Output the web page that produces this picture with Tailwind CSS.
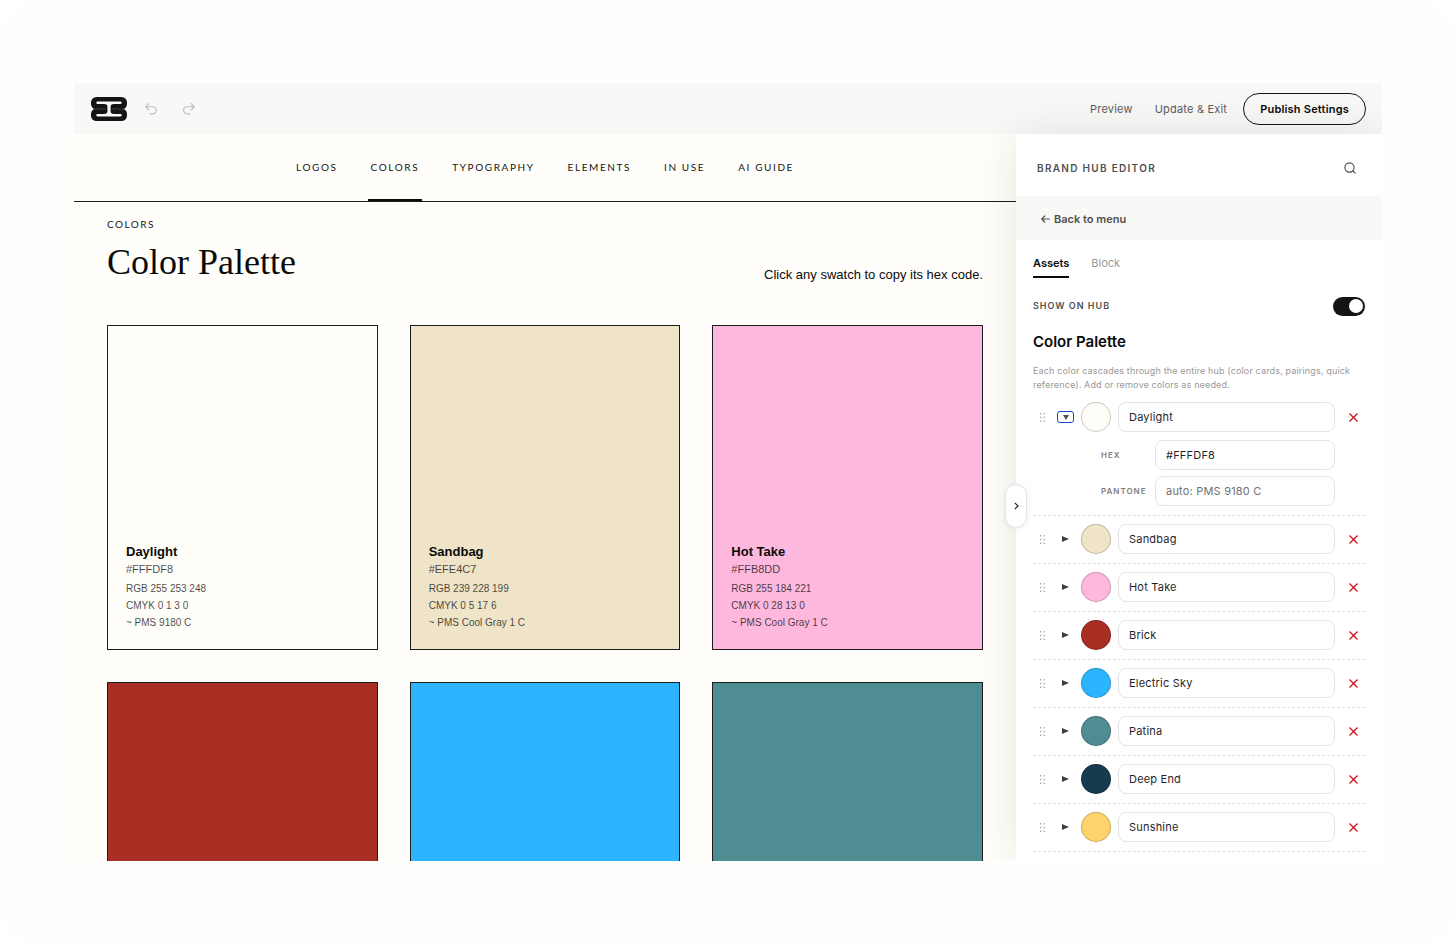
<!DOCTYPE html>
<html lang="en">
  <head>
    <meta charset="UTF-8" />
    <meta name="viewport" content="width=device-width, initial-scale=1.0" />
    <title>Brand Hub Editor</title>
    <script src="https://cdn.jsdelivr.net/npm/@tailwindcss/browser@4"></script>
  </head>
  <body class="bg-white font-['Inter',sans-serif]">
    <div class="h-screen rounded-[40px] bg-[#fefefc] px-[74px] pt-[83px] pb-[84px]">
      <div class="flex h-full flex-col overflow-hidden bg-[#fffefa]">
        <!-- Top bar -->
        <header class="flex h-[51px] shrink-0 items-center bg-[#f8f8f7] px-4">
          <a href="#" aria-label="Home" class="ml-px">
            <svg class="h-6 w-9" viewBox="0 0 36 24" fill="none">
              <rect width="36" height="12.500" rx="5.500" fill="#141414" />
              <rect y="11.500" width="36" height="12.500" rx="5.500" fill="#141414" />
              <path d="M6.500 4.600H29.500C31.200 4.600 31.200 7 29.500 7H23C20.500 7 19.600 8 19.600 9.500V14.500C19.600 16 20.500 17 23 17H29.500C31.200 17 31.200 19.400 29.500 19.400H6.500C4.800 19.400 4.800 17 6.500 17H13C15.500 17 16.400 16 16.400 14.500V9.500C16.400 8 15.500 7 13 7H6.500C4.800 7 4.800 4.600 6.500 4.600Z" fill="#f8f8f7" />
              <path d="M3 12H15M21 12H33" stroke="#5a5a5a" stroke-width=".6" />
            </svg>
          </a>
          <button aria-label="Undo" class="ml-[18px] text-[#bcbcbc]">
            <svg class="h-3 w-3" viewBox="0 0 12 12" fill="none" stroke="currentColor" stroke-width="1.100" stroke-linecap="round" stroke-linejoin="round"><path d="M3.800 .6L.6 3.800L3.800 7M.6 3.800H7.800A3.500 3.500 0 0 1 7.800 10.900H5.400" /></svg>
          </button>
          <button aria-label="Redo" class="ml-[26px] text-[#bcbcbc]">
            <svg class="h-3 w-3" viewBox="0 0 12 12" fill="none" stroke="currentColor" stroke-width="1.100" stroke-linecap="round" stroke-linejoin="round"><path d="M8.200 .6L11.400 3.800L8.200 7M11.400 3.800H4.200A3.500 3.500 0 0 0 4.200 10.900H6.600" /></svg>
          </button>
          <div class="ml-auto flex items-center text-[11px] tracking-[0.2px] text-[#5c5c5c]">
            <button class="pt-0.5">Preview</button>
            <button class="ml-[22px] pt-0.5">Update &amp; Exit</button>
            <button class="ml-4 h-8 rounded-full border border-[#141414] px-4 pt-px font-semibold text-[#0a0a0a]">Publish Settings</button>
          </div>
        </header>

        <div class="flex min-h-0 flex-1">
          <!-- Hub preview -->
          <main class="min-w-0 flex-1">
            <nav class="flex h-[68px] justify-center gap-[27px] border-b border-[#1c1c1c] font-['Lato',sans-serif] text-[10px] tracking-[1.6px] text-[#141414]">
              <a href="#" class="flex items-center px-[3px]">LOGOS</a>
              <a href="#" class="flex items-center border-b-2 border-[#0a0a0a] px-[3px] pt-0.5">COLORS</a>
              <a href="#" class="flex items-center px-[3px]">TYPOGRAPHY</a>
              <a href="#" class="flex items-center px-[3px]">ELEMENTS</a>
              <a href="#" class="flex items-center px-[3px]">IN USE</a>
              <a href="#" class="flex items-center px-[3px]">AI GUIDE</a>
            </nav>
            <section class="px-[33px] pt-4">
              <p class="font-['Lato',sans-serif] text-[10px] leading-3 tracking-[1.5px] text-[#141414]">COLORS</p>
              <div class="flex items-end justify-between">
                <h1 class="pt-2 font-['Liberation_Serif',serif] text-[36px] leading-[48px] text-[#0a0a0a]">Color Palette</h1>
                <p class="font-['Liberation_Sans',sans-serif] text-[13px] leading-[22px] text-[#0a0a0a]">Click any swatch to copy its hex code.</p>
              </div>
              <div id="cards" class="mt-[39px] grid grid-cols-3 gap-8 font-['Liberation_Sans',sans-serif]"></div>
            </section>
          </main>

          <!-- Editor panel -->
          <aside class="relative w-[366px] shrink-0 bg-white shadow-[0_0_40px_rgba(40,35,20,0.11)]">
            <button aria-label="Collapse panel" class="absolute top-[350px] left-[-11px] flex h-11 w-[22px] items-center justify-center rounded-[11px] border border-[#e4e4e4] bg-white shadow-[0_1px_6px_rgba(0,0,0,0.08)]">
              <svg class="h-2 w-[5px]" viewBox="0 0 5 8" fill="none" stroke="#222" stroke-width="1.200"><path d="M.8 .8L4 4L.8 7.200" /></svg>
            </button>
            <div class="flex h-[62px] items-center justify-between pt-1.5 pr-[26px] pl-[21px]">
              <h2 class="text-[10px] font-semibold tracking-[1.3px] text-[#505050]">BRAND HUB EDITOR</h2>
              <button aria-label="Search">
                <svg class="h-3 w-3" viewBox="0 0 12 12" fill="none" stroke="#444" stroke-width="1.100" stroke-linecap="round"><circle cx="5.500" cy="5.500" r="4.600" /><path d="M8.800 8.800L11.200 11.200" /></svg>
              </button>
            </div>
            <div class="flex h-11 items-center bg-[#f8f8f7] px-[25px] pt-0.5">
              <button class="flex items-center gap-1 text-[11px] font-semibold text-[#505050]">
                <svg class="h-2 w-[9px]" viewBox="0 0 9 8" fill="none" stroke="currentColor" stroke-width="1.200" stroke-linecap="round" stroke-linejoin="round"><path d="M3.700 1L.8 4L3.700 7M.8 4H8.400" /></svg>
                Back to menu
              </button>
            </div>
            <div class="px-[17px]">
              <div class="flex gap-[22px] pt-[13px] text-[11px] leading-5">
                <button class="border-b-2 border-[#0a0a0a] pb-[3px] font-semibold text-[#0a0a0a]">Assets</button>
                <button class="border-b-2 border-transparent pb-[3px] text-[#989898]">Block</button>
              </div>
              <div class="mt-[18px] flex h-5 items-center justify-between">
                <label for="show" class="text-[9px] font-semibold tracking-[1px] text-[#505050]">SHOW ON HUB</label>
                <input id="show" type="checkbox" checked class="flex h-[19px] w-8 appearance-none items-center rounded-full bg-[#8d8d8d] p-0.5 before:h-[14px] before:w-[14px] before:rounded-full before:bg-white checked:justify-end checked:bg-[#141414]" />
              </div>
              <h3 class="mt-4 text-[15px] leading-5 font-semibold text-[#0a0a0a]">Color Palette</h3>
              <p class="mt-3 text-[9px] leading-[14px] tracking-[0.15px] text-[#989898]">Each color cascades through the entire hub (color cards, pairings, quick reference). Add or remove colors as needed.</p>
              <ul id="rows" class="mt-0.5"></ul>
            </div>
          </aside>
        </div>
      </div>
    </div>

    <script>
      const colors = [
        { name: "Daylight", hex: "#FFFDF8", rgb: "255 253 248", cmyk: "0 1 3 0", pms: "PMS 9180 C", open: true },
        { name: "Sandbag", hex: "#EFE4C7", rgb: "239 228 199", cmyk: "0 5 17 6", pms: "PMS Cool Gray 1 C" },
        { name: "Hot Take", hex: "#FFB8DD", rgb: "255 184 221", cmyk: "0 28 13 0", pms: "PMS Cool Gray 1 C" },
        { name: "Brick", hex: "#A92F24" },
        { name: "Electric Sky", hex: "#2DB4FF" },
        { name: "Patina", hex: "#4F8D93" },
        { name: "Deep End", hex: "#163B4E" },
        { name: "Sunshine", hex: "#FFD36B" },
      ];

      const field = "h-[30px] min-w-0 flex-1 rounded-lg border border-[#e4e4e4] bg-white px-2.5 text-[11px] tracking-[0.2px] text-[#1f1f2e] placeholder:text-[#707070]";

      // swatch cards
      document.getElementById("cards").innerHTML = colors.slice(0, 6).map((c) => `
        <button aria-label="Copy ${c.name}" class="flex aspect-[5/6] flex-col justify-end border border-[#1c1c1c] px-[18px] pb-[18px] text-left text-[10px] leading-[17px] text-[#0a0a0a]/75" style="background:${c.hex}">
          ${c.rgb ? `
          <span class="text-[13px] leading-[18px] font-bold text-[#0a0a0a]">${c.name}</span>
          <span class="text-[11px] leading-4">${c.hex}</span>
          <span class="mt-[3px]">RGB ${c.rgb}</span>
          <span>CMYK ${c.cmyk}</span>
          <span>~ ${c.pms}</span>` : ""}
        </button>`).join("");

      // editor rows
      document.getElementById("rows").innerHTML = colors.map((c, i) => `
        <li class="border-b border-dashed border-[#dedede] pt-2 pb-[9px]">
          <div class="flex items-center gap-[7px]">
            <button aria-label="Drag" class="flex w-[17px] justify-end pr-[5px]">
              <svg class="h-[9px] w-[5px]" viewBox="0 0 5 9" fill="#b0b0b0"><path d="M0 0h1.400v1.400H0zM3.600 0H5v1.400H3.600zM0 3.800h1.400v1.400H0zM3.600 3.800H5v1.400H3.600zM0 7.600h1.400V9H0zM3.600 7.600H5V9H3.600z" /></svg>
            </button>
            <button aria-label="Toggle ${c.name}" class="flex h-3 w-[17px] items-center justify-center rounded-[3px] ${c.open ? "border-[1.5px] border-[#0b4fc4]" : ""}">
              ${c.open
                ? `<svg class="h-[5px] w-[6px]" viewBox="0 0 6 5" fill="#505050"><path d="M0 0H6L3 5z" /></svg>`
                : `<svg class="h-[6px] w-[7px]" viewBox="0 0 7 6" fill="#404040"><path d="M0 0L7 3L0 6z" /></svg>`}
            </button>
            <button aria-label="Pick ${c.name}" class="h-[30px] w-[30px] rounded-full border border-black/20" style="background:${c.hex}"></button>
            <input type="text" aria-label="Color name" value="${c.name}" class="${field}" />
            <button aria-label="Remove ${c.name}" class="flex w-[23px] justify-center">
              <svg class="h-[9px] w-[9px]" viewBox="0 0 9 9" fill="none" stroke="#cc1414" stroke-width="1.300"><path d="M.5 .5L8.500 8.500M8.500 .5L.5 8.500" /></svg>
            </button>
          </div>
          ${c.open ? `
          <div class="mt-2 mr-[30px] ml-[68px] flex flex-col gap-1.5 text-[8px] font-semibold tracking-[1px] text-[#808080]">
            <div class="flex items-center">
              <label for="hex${i}" class="w-[54px]">HEX</label>
              <input id="hex${i}" type="text" value="${c.hex}" class="${field} font-normal" />
            </div>
            <div class="flex items-center">
              <label for="pms${i}" class="w-[54px]">PANTONE</label>
              <input id="pms${i}" type="text" placeholder="auto: ${c.pms}" class="${field} font-normal" />
            </div>
          </div>` : ""}
        </li>`).join("");
    </script>
  </body>
</html>
